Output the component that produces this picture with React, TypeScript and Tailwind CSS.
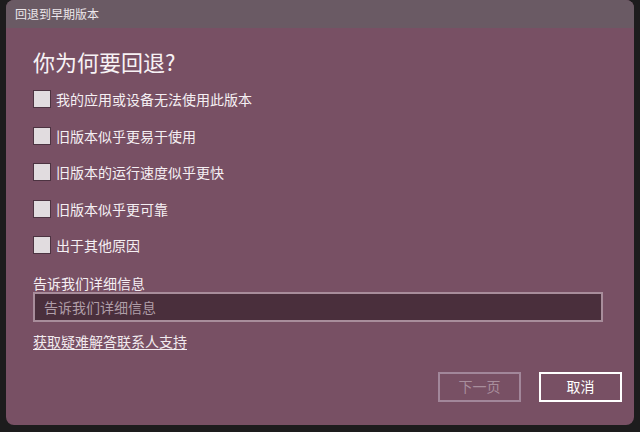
import React, { useState } from 'react';

const reasons = [
  '我的应用或设备无法使用此版本',
  '旧版本似乎更易于使用',
  '旧版本的运行速度似乎更快',
  '旧版本似乎更可靠',
  '出于其他原因',
];

const App: React.FC = () => {
  const [checked, setChecked] = useState<boolean[]>(reasons.map(() => false));
  const [details, setDetails] = useState('');

  const toggle = (i: number) => {
    setChecked((prev) => prev.map((v, idx) => (idx === i ? !v : v)));
  };

  return (
    <div
      className="w-[640px] h-[432px] bg-[#1d1c1d] overflow-hidden"
      style={{ fontFamily: '"Noto Sans CJK SC", "Noto Sans", sans-serif' }}
    >
      <div className="ml-[6px] w-[628px] h-[425px] rounded-lg overflow-hidden flex flex-col bg-[#785064]">
        {/* title bar */}
        <div className="h-[28px] shrink-0 bg-[#6a5a64] flex items-center pl-[9px] text-[12px] leading-none text-[#ece6ea]">
          回退到早期版本
        </div>

        <div className="flex-1 flex flex-col pl-[27px] pr-[12px] text-white">
          <h1 className="mt-[18px] h-[30px] text-[22px] leading-[30px] font-normal text-[#f7f2f5]">
            你为何要回退?
          </h1>

          <div className="mt-[5px] flex flex-col">
            {reasons.map((r, i) => (
              <label
                key={r}
                className="h-[36.5px] flex items-center gap-[5px] cursor-pointer"
                onClick={() => toggle(i)}
              >
                <span
                  className={`w-[18px] h-[18px] shrink-0 border-[1.5px] border-[#4c3341] ${
                    checked[i] ? 'bg-[#ffffff]' : 'bg-[#e1dcdf]'
                  }`}
                />
                <span className="text-[14px] leading-[20px] text-[#f5eff3]">{r}</span>
              </label>
            ))}
          </div>

          <div className="mt-[10px] h-[18px] text-[14px] leading-[18px] text-[#f5eff3]">
            告诉我们详细信息
          </div>
          <input
            value={details}
            onChange={(e) => setDetails(e.target.value)}
            placeholder="告诉我们详细信息"
            className="w-[570px] h-[30px] bg-[#4a2f3c] border-2 border-[#a88d9b] px-[9px] text-[14px] text-white placeholder:text-[#b09ea8] outline-none"
          />

          <a
            href="#"
            className="mt-[9px] h-[20px] self-start text-[14px] leading-[20px] text-[#f1eaee] underline underline-offset-2"
          >
            获取疑难解答联系人支持
          </a>

          <div className="mt-[21px] flex justify-end gap-[18px]">
            <button
              type="button"
              disabled
              className="w-[83px] h-[30px] border-2 border-[#a2879a] text-[14px] text-[#a88e9c]"
            >
              下一页
            </button>
            <button
              type="button"
              className="w-[83px] h-[30px] border-2 border-white text-[14px] text-white"
            >
              取消
            </button>
          </div>
        </div>
      </div>
    </div>
  );
};

export default App;
